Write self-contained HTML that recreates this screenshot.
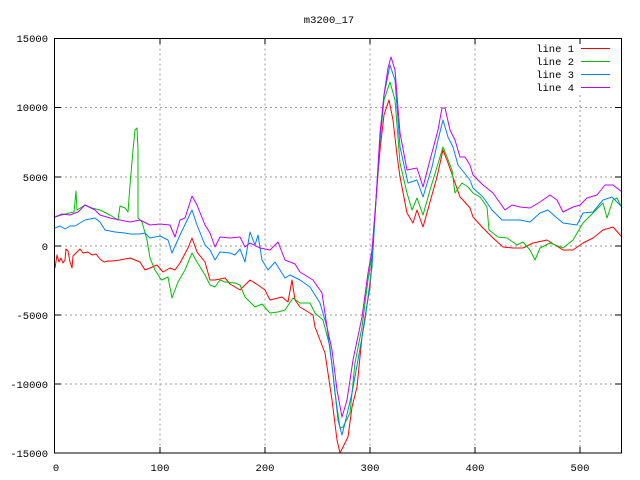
<!DOCTYPE html>
<html><head><meta charset="utf-8"><style>
html,body{margin:0;padding:0;background:#fff;}
svg{display:block;}
text{font-family:"Liberation Mono",monospace;font-size:10.5px;fill:#000;}
</style></head><body>
<svg width="640" height="480" viewBox="0 0 640 480" xmlns="http://www.w3.org/2000/svg">
<rect width="640" height="480" fill="#fff"/>
<g stroke="#999" stroke-width="1" stroke-dasharray="2,3" fill="none" shape-rendering="crispEdges">
<line x1="160" y1="38.5" x2="160" y2="453"/>
<line x1="265" y1="38.5" x2="265" y2="453"/>
<line x1="370" y1="38.5" x2="370" y2="453"/>
<line x1="475" y1="38.5" x2="475" y2="453"/>
<line x1="580" y1="95" x2="580" y2="453"/>
<line x1="55" y1="107.5" x2="621" y2="107.5"/>
<line x1="55" y1="177" x2="621" y2="177"/>
<line x1="55" y1="246" x2="621" y2="246"/>
<line x1="55" y1="315" x2="621" y2="315"/>
<line x1="55" y1="384" x2="621" y2="384"/>
</g>
<g fill="none" stroke-width="1" stroke-linejoin="round">
<polyline stroke="#ff0000" points="55,268 57,255 59,262 61,258 63,263 65,260 66,249 68,251 70,262 72,268 73,256 76,253 80,249 83,253 88,252 92,255 96,254 100,259 104,262 108,261 112,261 120,260 130,258 140,262 145,270 150,268 157,265 163,272 170,268 175,270 180,263 188,248 192,238 197,252 205,262 210,280 215,280 220,279 225,278 230,284 240,290 250,280 258,285 265,290 270,300 282,297 288,302 292,280 295,300 300,307 313,315 315,327 325,353 332,400 337,440 340,453 343,447 348,437 352,407 357,387 362,337 365,317 370,287 372,260 376,200 380,150 384,115 389,100 393,120 397,155 400,177 407,213 413,223 417,210 423,227 430,202 437,177 443,150 448,163 453,177 460,197 463,200 470,208 473,217 483,228 493,238 503,247 513,248 523,248 533,243 547,240 555,245 563,250 573,250 583,243 593,238 603,230 613,227 622,237"/>
<polyline stroke="#00c000" points="55,217 65,214 74,212 76,191 77,210 85,205 92,208 100,210 110,215 115,218 118,220 120,206 125,208 128,212 130,185 133,150 135,130 137,128 138,150 138,218 142,222 147,240 150,258 155,270 160,278 162,280 168,277 172,298 178,282 185,270 192,253 197,262 205,275 210,285 215,287 220,280 225,282 235,283 240,285 245,297 255,307 262,304 270,313 278,312 285,310 293,298 300,303 310,303 315,313 323,320 330,347 335,393 340,428 343,427 350,413 355,363 362,327 368,280 372,255 376,200 380,140 384,100 390,82 395,100 400,163 407,193 412,210 417,198 423,215 430,190 437,167 443,147 447,157 452,170 455,193 462,183 468,187 473,193 480,197 487,207 489,230 498,237 507,238 517,245 523,242 530,250 535,260 540,248 550,243 563,248 573,240 583,223 593,213 603,203 607,218 613,200 617,198 622,208"/>
<polyline stroke="#0080ff" points="55,228 60,226 65,229 70,226 75,226 85,220 95,218 100,222 105,230 115,232 125,233 130,234 140,234 145,233 150,238 160,236 168,240 172,253 180,235 192,210 197,225 205,245 210,250 215,260 220,252 230,253 235,255 240,249 245,262 250,232 255,245 258,235 262,260 268,270 275,262 280,270 285,278 290,275 300,280 310,287 320,303 327,327 333,373 338,420 342,435 345,423 352,393 358,360 365,320 372,267 376,200 380,140 384,95 390,65 395,80 400,147 408,183 417,180 423,197 432,167 438,140 443,120 448,137 453,147 458,165 470,180 473,188 483,197 492,210 502,220 510,220 520,220 530,222 540,213 548,210 557,218 563,223 577,225 583,213 593,212 603,200 612,197 622,207"/>
<polyline stroke="#c000ff" points="55,217 62,214 70,215 78,212 85,205 95,210 100,215 110,218 120,220 130,222 140,220 150,225 160,224 170,225 175,237 180,220 185,218 192,196 197,205 205,225 210,233 215,247 220,237 230,238 240,237 245,247 250,243 260,248 270,250 278,242 285,260 295,264 300,272 313,280 322,293 327,327 332,350 337,390 342,417 347,400 353,360 362,317 368,273 372,250 376,200 380,133 384,95 388,68 391,57 395,70 400,133 407,170 417,168 423,187 430,160 438,130 442,108 445,108 450,130 455,140 460,157 465,157 470,165 473,175 483,185 493,193 505,210 512,205 520,207 530,208 540,202 550,195 557,200 563,212 573,207 580,205 587,198 597,195 605,185 613,185 622,192"/>
</g>
<g shape-rendering="crispEdges">
<rect x="54.5" y="38.5" width="567" height="414.5" fill="none" stroke="#000" stroke-width="1"/>
<g stroke="#000" stroke-width="1">
<line x1="55" y1="107.5" x2="61" y2="107.5"/><line x1="615" y1="107.5" x2="621" y2="107.5"/>
<line x1="55" y1="177" x2="61" y2="177"/><line x1="615" y1="177" x2="621" y2="177"/>
<line x1="55" y1="246" x2="61" y2="246"/><line x1="615" y1="246" x2="621" y2="246"/>
<line x1="55" y1="315" x2="61" y2="315"/><line x1="615" y1="315" x2="621" y2="315"/>
<line x1="55" y1="384" x2="61" y2="384"/><line x1="615" y1="384" x2="621" y2="384"/>
<line x1="160" y1="38" x2="160" y2="44"/><line x1="160" y1="447" x2="160" y2="453"/>
<line x1="265" y1="38" x2="265" y2="44"/><line x1="265" y1="447" x2="265" y2="453"/>
<line x1="370" y1="38" x2="370" y2="44"/><line x1="370" y1="447" x2="370" y2="453"/>
<line x1="475" y1="38" x2="475" y2="44"/><line x1="475" y1="447" x2="475" y2="453"/>
<line x1="580" y1="38" x2="580" y2="44"/><line x1="580" y1="447" x2="580" y2="453"/>
</g>
<line x1="581" y1="48.5" x2="610" y2="48.5" stroke="#ff0000"/>
<line x1="581" y1="61.5" x2="610" y2="61.5" stroke="#00c000"/>
<line x1="581" y1="74.5" x2="610" y2="74.5" stroke="#0080ff"/>
<line x1="581" y1="87.5" x2="610" y2="87.5" stroke="#c000ff"/>
</g>
<text x="329" y="23" text-anchor="middle">m3200_17</text>
<g text-anchor="end">
<text x="48" y="42">15000</text>
<text x="48" y="111">10000</text>
<text x="48" y="181">5000</text>
<text x="48" y="250">0</text>
<text x="48" y="319">-5000</text>
<text x="48" y="388">-10000</text>
<text x="48" y="457">-15000</text>
</g>
<g text-anchor="middle">
<text x="56" y="471">0</text>
<text x="160" y="471">100</text>
<text x="265" y="471">200</text>
<text x="370" y="471">300</text>
<text x="475" y="471">400</text>
<text x="580" y="471">500</text>
</g>
<g text-anchor="end">
<text x="574" y="52">line 1</text>
<text x="574" y="65">line 2</text>
<text x="574" y="78">line 3</text>
<text x="574" y="91">line 4</text>
</g>
</svg>
</body></html>
